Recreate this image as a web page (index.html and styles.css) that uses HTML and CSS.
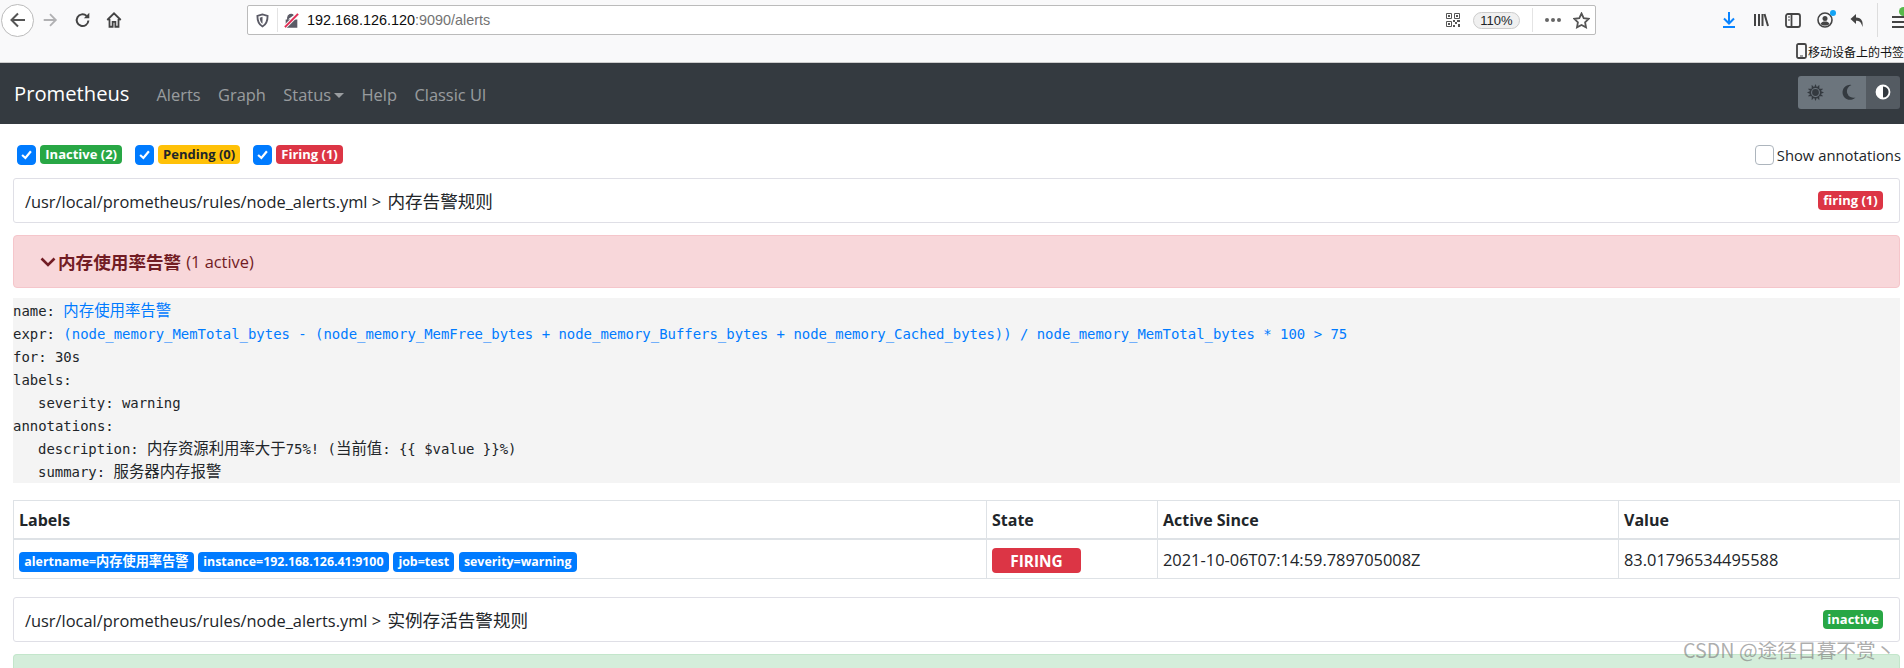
FILE: index.html
```html
<!DOCTYPE html>
<html>
<head>
    <meta charset="utf-8">
    <title>Prometheus Time Series Collection and Processing Server</title>
    <link rel="stylesheet" href="styles.css">
</head>
<body>
    <div class="browser-bar">
        <div class="toolbar">
            <div class="nav-btns">
                <span class="back-btn">
                    <svg width="20" height="20" viewBox="0 0 20 20"><path d="M17 10H4M10 3.500L3.500 10l6.500 6.500" fill="none" stroke="#555" stroke-width="2"/></svg>
                </span>
                <svg class="forward-icon" width="18" height="18" viewBox="0 0 20 20"><path d="M3 10h13M10 3.500l6.500 6.500-6.500 6.500" fill="none" stroke="#b1b1b3" stroke-width="2"/></svg>
                <svg class="reload-icon" width="18" height="18" viewBox="0 0 20 20"><path d="M16 10.500a6.500 6.500 0 1 1-2-5" fill="none" stroke="#444" stroke-width="2.200"/><path d="M17 2v6h-6z" fill="#444"/></svg>
                <svg class="home-icon" width="18" height="18" viewBox="0 0 20 20"><path d="M2.500 10 10 2.500l7.500 7.500M5 9v8.500h3.500V12h3v5.500H15V9" fill="none" stroke="#444" stroke-width="2"/></svg>
            </div>
            <div class="url-bar">
                <svg class="shield-icon" width="13" height="15" viewBox="0 0 14 15"><path d="M7 1 1.500 2.500c0 5 .5 9 5.500 11.500 5-2.500 5.500-6.500 5.500-11.500z" fill="none" stroke="#5b5b66" stroke-width="2"/><path d="M7 3.500v7.500c-2-1.500-2.800-3.500-3-6.500z" fill="#5b5b66"/></svg>
                <span class="url-sep"></span>
                <svg class="lock-icon" width="15" height="15" viewBox="0 0 16 16"><path d="M4 7V5a3.500 3.500 0 0 1 6-2.400M2.500 7.500h11v7.500h-11z" fill="#5b5b66" stroke="#5b5b66" stroke-width="1.400"/><path d="M1 15 15 1" stroke="#f6f6f6" stroke-width="4"/><path d="M1 15 15 1" stroke="#e22850" stroke-width="2"/></svg>
                <span class="url-text">192.168.126.120<span class="url-dim">:9090/alerts</span></span>
                <span class="url-spacer"></span>
                <svg class="qr-icon" width="14" height="14" viewBox="0 0 14 14"><path d="M.5.500h5v5h-5zM8.500.500h5v5h-5zM.5 8.500h5v5h-5z" fill="none" stroke="#555"/><path d="M2 2h2v2H2zM10 2h2v2h-2zM2 10h2v2H2zM7 7h2v2H7zM11 7h3v2h-3zM9 9h2v2H9zM7 12h2v2H7zM12 11h2v3h-2z" fill="#555"/></svg>
                <span class="zoom-pill">110%</span>
                <span class="url-sep second"></span>
                <span class="more-dots"><i></i><i></i><i></i></span>
                <svg class="star-icon" width="17" height="17" viewBox="0 0 17 17"><path d="M8.500 1.500l2.200 4.600 5 .7-3.600 3.500.9 5-4.500-2.400-4.500 2.400.9-5L1.300 6.800l5-.7z" fill="none" stroke="#555" stroke-width="1.800"/></svg>
            </div>
            <div class="tool-icons">
                <svg width="16" height="18" viewBox="0 0 16 18"><path d="M8 1v11M3 7.500 8 12.500l5-5" fill="none" stroke="#0a84ff" stroke-width="2"/><path d="M2 16h12" stroke="#0a84ff" stroke-width="2"/></svg>
                <svg width="16" height="16" viewBox="0 0 16 16"><path d="M2 2v12M6 2v12M9.500 2v12M11.500 2l3.500 12" fill="none" stroke="#444" stroke-width="2"/></svg>
                <svg width="16" height="15" viewBox="0 0 16 15"><rect x="1" y="1" width="14" height="13" rx="2" fill="none" stroke="#444" stroke-width="1.800"/><path d="M6.500 1v13" stroke="#444" stroke-width="1.800"/><path d="M3 4h2M3 7h2" stroke="#444"/></svg>
                <span class="profile-icon">
                    <svg width="16" height="16" viewBox="0 0 16 16"><circle cx="8" cy="8" r="7" fill="none" stroke="#444" stroke-width="1.600"/><circle cx="8" cy="6.500" r="2.500" fill="#444"/><path d="M3.500 12c1-2 2.500-2.500 4.500-2.500s3.500.5 4.500 2.500c-2.500 2-6.500 2-9 0z" fill="#444"/></svg>
                    <i class="profile-dot"></i>
                </span>
                <svg width="16" height="15" viewBox="0 0 15 15"><path d="M6.500 1 1 6l5.500 5V7.800c3 0 5 .7 6.500 6.200.8-5-.5-9.500-6.500-9.500z" fill="#444"/></svg>
                <span class="tool-sep"></span>
                <span class="menu-icon"><i></i><i></i><i></i><b class="menu-badge"></b></span>
            </div>
        </div>
        <div class="bookmarks">
            <svg width="11" height="16" viewBox="0 0 11 16"><rect x="1" y="1" width="9" height="14" rx="1.500" fill="none" stroke="#444" stroke-width="1.800"/><path d="M4 13h3" stroke="#444"/></svg>
            <span>移动设备上的书签</span>
        </div>
    </div>

    <nav class="navbar">
        <a class="navbar-brand">Prometheus</a>
        <a class="nav-link">Alerts</a>
        <a class="nav-link">Graph</a>
        <a class="nav-link">Status<span class="caret"></span></a>
        <a class="nav-link">Help</a>
        <a class="nav-link">Classic UI</a>
        <div class="theme-group">
            <span class="theme-btn">
                <svg width="17" height="17" viewBox="0 0 16 16"><path d="M8 0l1.300 3 2.300-2.300v3.700h3.700L13 6.700l3 1.300-3 1.300 2.300 2.300h-3.700v3.700L9.300 13 8 16l-1.300-3-2.300 2.300v-3.700H.7L3 9.300 0 8l3-1.300L.7 4.400h3.700V.7L6.700 3z" fill="#343a40"/><circle cx="8" cy="8" r="3.700" fill="#343a40" stroke="#6c757d"/></svg>
            </span>
            <span class="theme-btn">
                <svg width="16" height="16" viewBox="0 0 16 16"><path d="M10.500 1A7.500 7.500 0 1 0 14.500 13.500 6.500 6.500 0 0 1 10.500 1z" fill="#343a40"/></svg>
            </span>
            <span class="theme-btn active">
                <svg width="16" height="16" viewBox="0 0 16 16"><circle cx="8" cy="8" r="6.500" fill="#343a40" stroke="#fff" stroke-width="1.800"/><path d="M8 1.500a6.500 6.500 0 0 0 0 13z" fill="#fff"/></svg>
            </span>
        </div>
    </nav>

    <main class="container">
        <div class="filter-row">
            <label class="filter-item">
                <span class="checkbox checked"><svg width="11" height="11" viewBox="0 0 10 10"><path d="M1 5.500 4 8.200 9 2" fill="none" stroke="#fff" stroke-width="2"/></svg></span>
                <span class="badge badge-success">Inactive (2)</span>
            </label>
            <label class="filter-item">
                <span class="checkbox checked"><svg width="11" height="11" viewBox="0 0 10 10"><path d="M1 5.500 4 8.200 9 2" fill="none" stroke="#fff" stroke-width="2"/></svg></span>
                <span class="badge badge-warning">Pending (0)</span>
            </label>
            <label class="filter-item">
                <span class="checkbox checked"><svg width="11" height="11" viewBox="0 0 10 10"><path d="M1 5.500 4 8.200 9 2" fill="none" stroke="#fff" stroke-width="2"/></svg></span>
                <span class="badge badge-danger">Firing (1)</span>
            </label>
            <label class="show-annotations">
                <span class="checkbox"></span>
                <span>Show annotations</span>
            </label>
        </div>

        <div class="group-card">
            <span>/usr/local/prometheus/rules/node_alerts.yml &gt; <span class="cjk">内存告警规则</span></span>
            <span class="badge badge-danger">firing (1)</span>
        </div>

        <div class="alert alert-danger">
            <svg class="chevron" width="16" height="10" viewBox="0 0 16 10"><path d="M1.500 1.500 8 8l6.500-6.500" fill="none" stroke="#721c24" stroke-width="2.600"/></svg>
            <strong class="cjk">内存使用率告警</strong>
            <span class="alert-count">(1 active)</span>
        </div>

        <div class="rule-code">
            <div>name: <span class="code-link cjk-code">内存使用率告警</span></div>
            <div>expr: <span class="code-link">(node_memory_MemTotal_bytes - (node_memory_MemFree_bytes + node_memory_Buffers_bytes + node_memory_Cached_bytes)) / node_memory_MemTotal_bytes * 100 &gt; 75</span></div>
            <div>for: 30s</div>
            <div>labels:</div>
            <div class="code-indent">severity: warning</div>
            <div>annotations:</div>
            <div class="code-indent">description: <span class="cjk-code">内存资源利用率大于</span>75%! (<span class="cjk-code">当前值</span>: {{ $value }}%)</div>
            <div class="code-indent">summary: <span class="cjk-code">服务器内存报警</span></div>
        </div>

        <table class="alert-table">
            <thead>
                <tr>
                    <th class="col-labels">Labels</th>
                    <th class="col-state">State</th>
                    <th class="col-since">Active Since</th>
                    <th>Value</th>
                </tr>
            </thead>
            <tbody>
                <tr>
                    <td>
                        <span class="badge badge-primary">alertname=<span class="badge-cjk">内存使用率告警</span></span>
                        <span class="badge badge-primary">instance=192.168.126.41:9100</span>
                        <span class="badge badge-primary">job=test</span>
                        <span class="badge badge-primary">severity=warning</span>
                    </td>
                    <td><span class="state-badge">FIRING</span></td>
                    <td>2021-10-06T07:14:59.789705008Z</td>
                    <td>83.01796534495588</td>
                </tr>
            </tbody>
        </table>

        <div class="group-card second-group">
            <span>/usr/local/prometheus/rules/node_alerts.yml &gt; <span class="cjk">实例存活告警规则</span></span>
            <span class="badge badge-success">inactive</span>
        </div>

        <div class="alert alert-success"></div>
    </main>

    <div class="watermark">CSDN @途径日暮不赏丶</div>
</body>
</html>
```

FILE: styles.css
```css
* {
    box-sizing: border-box;
}

html, body {
    height: 668px;
    overflow: hidden;
}

body {
    margin: 0;
    background-color: white;
    color: #212529;
    font-family: "Open Sans", "Noto Sans CJK SC", sans-serif;
    font-size: 16.4px;
}

.cjk {
    font-size: 17.6px;
}

/* browser chrome */
.browser-bar {
    height: 63px;
    background-color: #f9f9fa;
    border-bottom: 1px solid #ccc;
}

.toolbar {
    height: 40px;
    display: flex;
    align-items: center;
}

.nav-btns {
    width: 247px;
    display: flex;
    align-items: center;
    flex: none;
}

.back-btn {
    width: 33px;
    height: 33px;
    border: 1px solid #bbb;
    border-radius: 50%;
    background-color: white;
    display: flex;
    align-items: center;
    justify-content: center;
    margin-left: 1px;
}

.forward-icon { margin-left: 7px; }
.reload-icon { margin-left: 15px; }
.home-icon { margin-left: 13px; }

.url-bar {
    width: 1349px;
    height: 30px;
    flex: none;
    background-color: white;
    border: 1px solid #bbb;
    border-radius: 2px;
    display: flex;
    align-items: center;
    padding: 0 5px 0 8px;
    font-family: "Liberation Sans", sans-serif;
    font-size: 14.400px;
}

.url-sep {
    width: 1px;
    height: 24px;
    background-color: #e4e4e4;
    margin: 0 6px 0 8px;
}

.url-text { margin-left: 8px; color: #0c0c0d; }
.url-dim { color: #737373; }
.url-spacer { flex: 1; }

.zoom-pill {
    margin-left: 13px;
    width: 47px;
    height: 17px;
    border: 1px solid #ccc;
    border-radius: 9px;
    background-color: #f0f0f0;
    font-size: 13px;
    line-height: 15px;
    text-align: center;
}

.url-sep.second { margin: 0 12px 0 12px; }

.more-dots {
    display: flex;
    gap: 2px;
    margin-right: 12px;
}

.more-dots i {
    width: 4px;
    height: 4px;
    border-radius: 50%;
    background-color: #666;
}

.tool-icons {
    display: flex;
    align-items: center;
    gap: 16px;
    margin-left: 125px;
    height: 34px;
    flex: none;
}

.profile-icon { position: relative; display: flex; }

.profile-dot {
    position: absolute;
    top: -2px;
    right: -3px;
    width: 6px;
    height: 6px;
    border-radius: 50%;
    background-color: #14a4f5;
}

.tool-sep {
    width: 1px;
    height: 34px;
    background-color: #ddd;
    margin-left: -4px;
}

.menu-icon {
    position: relative;
    display: flex;
    flex-direction: column;
    gap: 3px;
    margin: 3px 0 0 -2px;
}

.menu-icon i {
    width: 12px;
    height: 2px;
    background-color: #444;
}

.menu-badge {
    position: absolute;
    top: -9px;
    left: 7px;
    width: 9px;
    height: 9px;
    border-radius: 50%;
    background-color: #57b84a;
}

.bookmarks {
    display: flex;
    align-items: center;
    justify-content: flex-end;
    gap: 1px;
    height: 22px;
    font-size: 12px;
    font-family: "Noto Sans CJK SC", sans-serif;
    color: #111;
    white-space: nowrap;
}

/* navbar */
.navbar {
    height: 61px;
    background-color: #343a40;
    display: flex;
    align-items: center;
    padding: 2px 4px 0 14px;
}

.navbar-brand {
    color: white;
    font-size: 20.200px;
    margin-right: 27px;
    margin-top: -3px;
}

.nav-link {
    color: rgba(255,255,255,.5);
    margin-right: 17.500px;
}

.caret {
    display: inline-block;
    margin-left: 3px;
    vertical-align: 3px;
    border-top: 5px solid;
    border-left: 5px solid transparent;
    border-right: 5px solid transparent;
}

.theme-group {
    margin-left: auto;
    display: flex;
    height: 33px;
    border-radius: 3px;
    overflow: hidden;
    margin-top: -5px;
}

.theme-btn {
    width: 34px;
    background-color: #6c757d;
    display: flex;
    align-items: center;
    justify-content: center;
}

.theme-btn.active { background-color: #545b62; }

/* page */
.container {
    padding: 0 4px 0 13px;
}

.filter-row {
    display: flex;
    align-items: center;
    height: 54px;
    padding: 7px 0 0 4px;
}

.filter-item {
    display: flex;
    align-items: center;
    gap: 4px;
    margin-right: 12.500px;
}

.checkbox {
    width: 19px;
    height: 20px;
    border: 1px solid #adb5bd;
    border-radius: 4px;
    background-color: white;
    display: flex;
    align-items: center;
    justify-content: center;
}

.checkbox.checked {
    background-color: #007bff;
    border-color: #007bff;
}

.badge {
    display: inline-block;
    padding: 3.300px 5.300px;
    border-radius: 4px;
    font-size: 13px;
    font-weight: 700;
    line-height: 13.200px;
    color: white;
    white-space: nowrap;
}

.badge-success { background-color: #28a745; }
.badge-warning { background-color: #ffc107; color: #212529; }
.badge-danger { background-color: #dc3545; }
.badge-primary { background-color: #007bff; }

.show-annotations {
    margin: 0 -1px 0 auto;
    display: flex;
    align-items: center;
    gap: 3px;
    font-size: 14.800px;
}

.group-card {
    height: 45px;
    background-color: white;
    border: 1px solid #dfdfe6;
    border-radius: 3px;
    display: flex;
    align-items: center;
    justify-content: space-between;
    padding: 0 16px 0 11px;
}

.group-card .cjk { margin-left: 2px; }

.alert {
    margin-top: 12px;
    height: 53px;
    border-radius: 4px;
    display: flex;
    align-items: center;
    padding-left: 26px;
}

.alert-danger {
    background-color: #f8d7da;
    border: 1px solid #f5c6cb;
    color: #721c24;
}

.alert-success {
    height: 15px;
    background-color: #d4edda;
    border: 1px solid #c3e6cb;
    border-bottom: none;
    border-radius: 4px 4px 0 0;
}

.chevron { margin-right: 2px; }
.alert-count { margin-left: 5px; }

.rule-code {
    margin: 10px 0 0;
    height: 185px;
    padding: 2px 0 0;
    background-color: #f4f4f4;
    font-family: "DejaVu Sans Mono", "Noto Sans CJK SC", monospace;
    font-size: 13.950px;
    line-height: 23px;
    color: #212529;
}

.rule-code div { white-space: pre; }

.code-indent { padding-left: 25px; }
.code-link { color: #007bff; }
.cjk-code { font-size: 15.400px; }

.alert-table {
    width: 100%;
    margin-top: 17px;
    border-collapse: collapse;
}

.alert-table th, .alert-table td {
    border: 1px solid #dee2e6;
    padding: 2px 5px 0;
    text-align: left;
}

.alert-table th {
    height: 38px;
    border-bottom-width: 2px;
    font-weight: 700;
    font-size: 16px;
}

.alert-table td { height: 40px; }
.alert-table .badge { font-size: 12.400px; }
.alert-table .badge-cjk { font-size: 13.200px; }

.col-labels { width: 973px; }
.col-state { width: 171px; }
.col-since { width: 461px; }

.state-badge {
    display: inline-block;
    width: 89px;
    height: 25px;
    border-radius: 4px;
    background-color: #dc3545;
    color: white;
    font-weight: 700;
    font-size: 15.400px;
    line-height: 27px;
    text-align: center;
    vertical-align: middle;
}

.second-group { margin-top: 18px; }

.second-group .badge { padding: 3.300px 4px; }

.watermark {
    position: absolute;
    left: 1683px;
    top: 635px;
    color: rgba(120,120,120,.6);
    font-family: "Noto Sans CJK SC", sans-serif;
    font-size: 19.700px;
    white-space: nowrap;
}
```
